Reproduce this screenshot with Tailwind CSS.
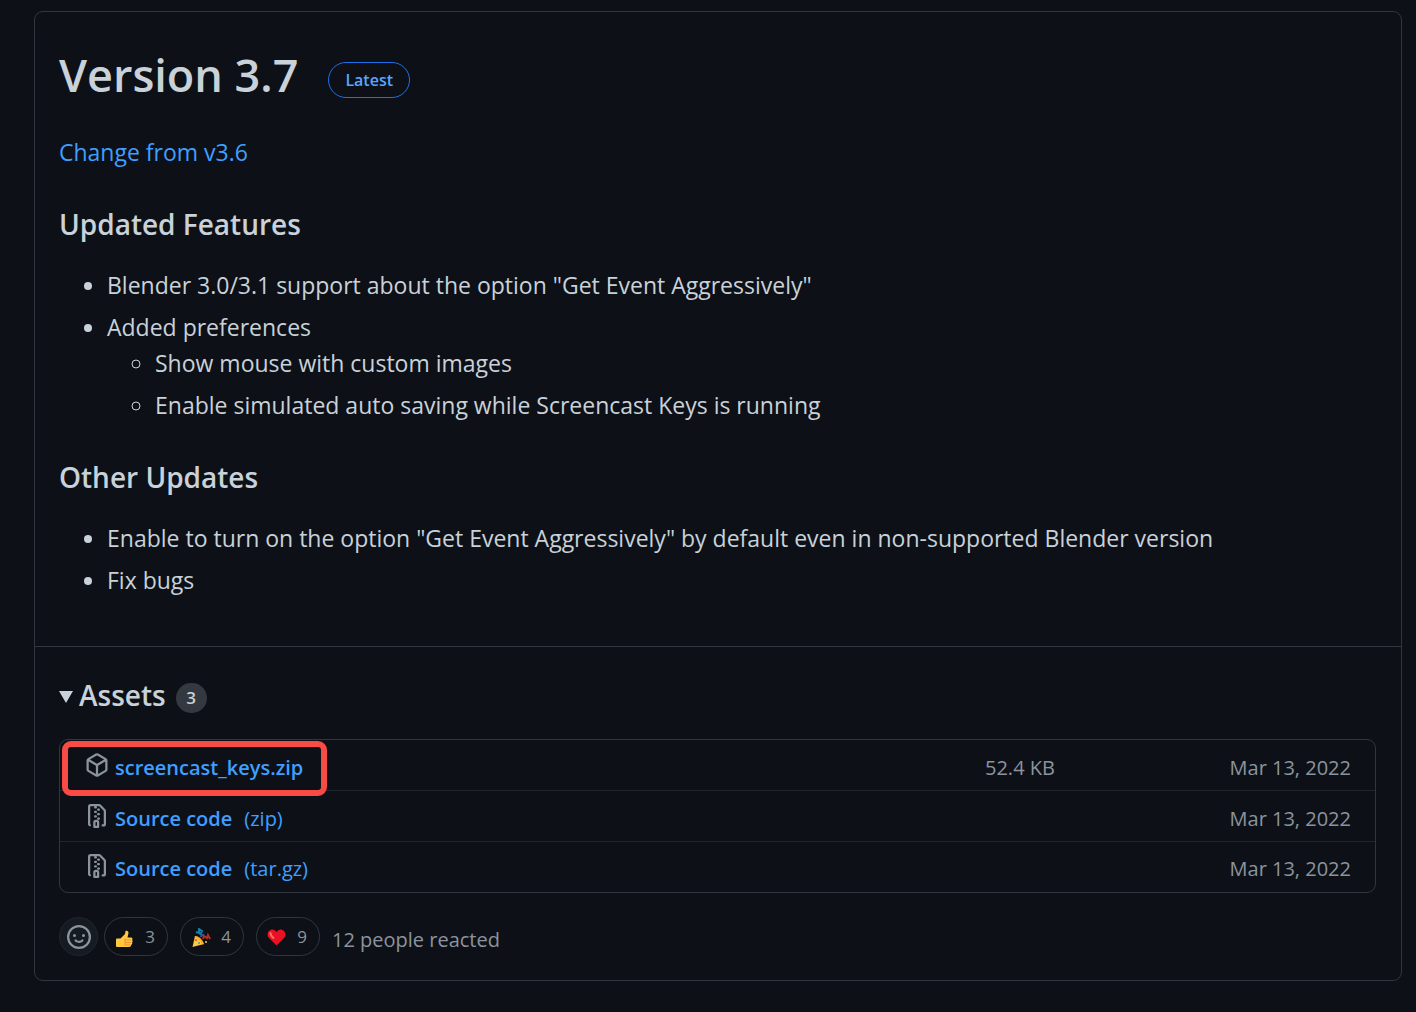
<!DOCTYPE html>
<html lang="en">
<head>
<meta charset="utf-8">
<meta name="viewport" content="width=device-width, initial-scale=1">
<title>Version 3.7</title>
<script src="https://cdn.jsdelivr.net/npm/@tailwindcss/browser@4"></script>
</head>
<body class="min-h-screen bg-[#0d1117] pt-[11px] pr-[14px] pb-[26px] pl-[34px] font-['Open_Sans','Noto_Sans',sans-serif] text-[23px] leading-[36px] text-[#c9d1d9]">
<main class="rounded-[9px] border border-[#30363d]">
  <section class="px-6 pt-[27px] pb-12">
    <header class="flex items-center gap-[30px]">
      <h1 class="text-[45px] leading-[72px] font-semibold">Version 3.7</h1>
      <span class="mt-[10px] rounded-full border border-[#1f6feb] px-4 text-[16px] leading-[34px] font-semibold text-[#58a6ff]">Latest</span>
    </header>
    <p class="mt-[23px]"><a href="#" class="text-[#409eff]">Change from v3.6</a></p>
    <h2 class="mt-9 text-[28px] font-semibold">Updated Features</h2>
    <ul class="mt-[25px] list-disc pl-12">
      <li>Blender 3.0/3.1 support about the option "Get Event Aggressively"</li>
      <li class="mt-[6px]">Added preferences
        <ul class="list-[circle] pl-12">
          <li>Show mouse with custom images</li>
          <li class="mt-[6px]">Enable simulated auto saving while Screencast Keys is running</li>
        </ul>
      </li>
    </ul>
    <h2 class="mt-9 text-[28px] font-semibold">Other Updates</h2>
    <ul class="mt-[25px] list-disc pl-12">
      <li>Enable to turn on the option "Get Event Aggressively" by default even in non-supported Blender version</li>
      <li class="mt-[6px]">Fix bugs</li>
    </ul>
  </section>
  <section class="border-t border-[#30363d] pt-[30px] pr-[25px] pb-6 pl-6">
    <details open>
      <summary class="flex list-none items-center">
        <svg class="mt-1 mr-[6px] h-[12px] w-[14px]" viewBox="0 0 14 12" fill="#c9d1d9"><path d="M0 0h14L7 12z"/></svg>
        <span class="text-[28px] leading-[36px] font-semibold">Assets</span>
        <span class="mt-[6px] ml-[10px] h-[30px] min-w-[31px] rounded-full bg-[#343941] px-2 text-center text-[17px] leading-[30px] font-semibold">3</span>
      </summary>
      <div class="relative mt-[26px] rounded-[9px] border border-[#30363d]">
        <table class="w-full text-[20px] leading-[30px]">
          <tbody>
            <tr class="h-[50px] border-b border-[#21262d]">
              <td class="pt-[6px] pl-[25px]"><div class="flex items-center">
                <svg class="mr-[6px] mb-[6px] h-6 w-6" viewBox="0 0 16 16" fill="#8b949e"><path fill-rule="evenodd" d="M8.878.392a1.75 1.75 0 00-1.756 0l-5.25 3.045A1.75 1.75 0 001 4.951v6.098c0 .624.332 1.2.872 1.514l5.25 3.045a1.75 1.75 0 001.756 0l5.25-3.045c.54-.313.872-.89.872-1.514V4.951c0-.624-.332-1.2-.872-1.514L8.878.392zM7.875 1.69a.25.25 0 01.25 0l4.63 2.685L8 7.133 3.245 4.375l4.63-2.685zM2.5 5.677v5.372c0 .09.047.171.125.216l4.625 2.683V8.432L2.5 5.677zm6.25 8.271l4.625-2.683a.25.25 0 00.125-.216V5.677L8.75 8.432v5.516z"/></svg>
                <a href="#" class="font-semibold text-[#409eff]">screencast_keys.zip</a></div></td>
              <td class="w-[120px] pt-[6px] text-left text-[#8b949e]">52.4 KB</td>
              <td class="w-[270px] pt-[6px] pr-6 text-right text-[#8b949e]">Mar 13, 2022</td>
            </tr>
            <tr class="h-[51px] border-b border-[#21262d]">
              <td class="pt-[6px] pl-[25px]"><div class="flex items-center">
                <svg class="mr-[6px] mb-[6px] h-6 w-6" viewBox="0 0 16 16" fill="#8b949e"><path fill-rule="evenodd" d="M3.5 1.75a.25.25 0 01.25-.25h3a.75.75 0 000 1.5h.5a.75.75 0 000-1.5h2.086a.25.25 0 01.177.073l2.914 2.914a.25.25 0 01.073.177v8.586a.25.25 0 01-.25.25h-.5a.75.75 0 000 1.5h.5A1.75 1.75 0 0014 13.25V4.664c0-.464-.184-.909-.513-1.237L10.573.513A1.75 1.75 0 009.336 0H3.75A1.75 1.75 0 002 1.75v11.5c0 .649.353 1.214.874 1.515a.75.75 0 10.752-1.298.25.25 0 01-.126-.217V1.75zM8.75 3a.75.75 0 000 1.5h.5a.75.75 0 000-1.5h-.5zM6 5.25a.75.75 0 01.75-.75h.5a.75.75 0 010 1.5h-.5A.75.75 0 016 5.25zm2 1.5A.75.75 0 018.75 6h.5a.75.75 0 010 1.5h-.5A.75.75 0 018 6.75zm-1.25.75a.75.75 0 000 1.5h.5a.75.75 0 000-1.5h-.5zM8 9.75A.75.75 0 018.75 9h.5a.75.75 0 010 1.5h-.5A.75.75 0 018 9.75zm-.75.75a1.75 1.75 0 00-1.75 1.75v3c0 .414.336.75.75.75h2.5a.75.75 0 00.75-.75v-3a1.75 1.75 0 00-1.75-1.75h-.5zM7 12.25a.25.25 0 01.25-.25h.5a.25.25 0 01.25.25v2.25H7v-2.25z"/></svg>
                <a href="#" class="text-[#409eff]"><span class="mr-3 font-semibold">Source code</span>(zip)</a></div></td>
              <td></td>
              <td class="pt-[6px] pr-6 text-right text-[#8b949e]">Mar 13, 2022</td>
            </tr>
            <tr class="h-[51px]">
              <td class="pt-1 pl-[25px]"><div class="flex items-center">
                <svg class="mr-[6px] mb-[6px] h-6 w-6" viewBox="0 0 16 16" fill="#8b949e"><path fill-rule="evenodd" d="M3.5 1.75a.25.25 0 01.25-.25h3a.75.75 0 000 1.5h.5a.75.75 0 000-1.5h2.086a.25.25 0 01.177.073l2.914 2.914a.25.25 0 01.073.177v8.586a.25.25 0 01-.25.25h-.5a.75.75 0 000 1.5h.5A1.75 1.75 0 0014 13.25V4.664c0-.464-.184-.909-.513-1.237L10.573.513A1.75 1.75 0 009.336 0H3.75A1.75 1.75 0 002 1.75v11.5c0 .649.353 1.214.874 1.515a.75.75 0 10.752-1.298.25.25 0 01-.126-.217V1.75zM8.75 3a.75.75 0 000 1.5h.5a.75.75 0 000-1.5h-.5zM6 5.25a.75.75 0 01.75-.75h.5a.75.75 0 010 1.5h-.5A.75.75 0 016 5.25zm2 1.5A.75.75 0 018.75 6h.5a.75.75 0 010 1.5h-.5A.75.75 0 018 6.75zm-1.25.75a.75.75 0 000 1.5h.5a.75.75 0 000-1.5h-.5zM8 9.75A.75.75 0 018.75 9h.5a.75.75 0 010 1.5h-.5A.75.75 0 018 9.75zm-.75.75a1.75 1.75 0 00-1.75 1.75v3c0 .414.336.75.75.75h2.5a.75.75 0 00.75-.75v-3a1.75 1.75 0 00-1.75-1.75h-.5zM7 12.25a.25.25 0 01.25-.25h.5a.25.25 0 01.25.25v2.25H7v-2.25z"/></svg>
                <a href="#" class="text-[#409eff]"><span class="mr-3 font-semibold">Source code</span>(tar.gz)</a></div></td>
              <td></td>
              <td class="pt-1 pr-6 text-right text-[#8b949e]">Mar 13, 2022</td>
            </tr>
          </tbody>
        </table>
        <div class="pointer-events-none absolute top-[1px] left-[2px] h-[55px] w-[265px] rounded-[9px] border-[6px] border-[#f94b46]"></div>
      </div>
    </details>
    <div class="mt-6 flex items-center text-[#8b949e]">
      <button aria-label="Add reaction" class="mr-[6px] flex size-[39px] items-center justify-center rounded-full border border-[#21262d] bg-[#161b22]">
        <svg class="size-6" viewBox="0 0 16 16" fill="#8b949e"><path fill-rule="evenodd" d="M1.5 8a6.5 6.5 0 1113 0 6.5 6.5 0 01-13 0zM8 0a8 8 0 100 16A8 8 0 008 0zM5 8a1 1 0 100-2 1 1 0 000 2zm7-1a1 1 0 11-2 0 1 1 0 012 0zM5.32 9.636a.75.75 0 011.038.175l.007.009c.103.118.22.222.35.31.264.178.683.37 1.285.37.602 0 1.02-.192 1.285-.371.13-.088.247-.192.35-.31l.007-.008a.75.75 0 111.222.87l-.614-.431c.614.43.614.431.613.431v.001l-.001.002-.002.003-.005.007-.014.019a1.984 1.984 0 01-.184.213c-.16.166-.338.316-.53.445-.63.418-1.37.638-2.127.629-.946 0-1.652-.308-2.126-.63a3.331 3.331 0 01-.715-.657l-.014-.02-.005-.006-.002-.003v-.002h-.001l.613-.432-.614.43a.75.75 0 01.183-1.044h.001z"/></svg>
      </button>
      <button class="mr-3 flex h-[39px] w-16 items-center justify-between rounded-full border border-[#30363d] pr-3 pl-[10px] text-[17px]">
        <svg class="mt-[4px] size-[18px]" viewBox="0 0 18 18"><path fill="#ffc83d" d="M1 9.500q0-1 1-1h3.500L10 4l.5-3c2-1 3 .5 3 2L12.500 7.500H16c1.500 0 2 1.500 1 2.500 1 1 .8 2 0 2.500.6 1 0 2-.8 2.300 0 1.700-.8 2.200-2.200 2.200H2q-1 0-1-1z"/><path fill="none" stroke="#e8912d" d="M10 10h6M10.500 12.500h5.500M10.500 15h5M10 8.500v7"/></svg>3</button>
      <button class="mr-3 flex h-[39px] w-16 items-center justify-between rounded-full border border-[#30363d] pr-3 pl-[10px] text-[17px]">
        <svg class="mt-[2px] size-[20px]" viewBox="0 0 20 20"><path fill="#ffc83d" d="M4 8q5 1 9 8L1.500 19z"/><path fill="#ffa62b" d="M4 8q6 0 9 8l-2 .5Q9 11 3.700 9z"/><path fill="none" stroke="#127fa5" stroke-width="2" d="M5 4l3 1V1l3 2-2 4"/><path fill="none" stroke="#5a4a9c" stroke-width="2" d="M10 9q1-3 3-2"/><path fill="none" stroke="#b5301c" stroke-width="2" d="M12 11l1-3 3 2 1-3 2 4"/><circle cx="15" cy="14" r="1" fill="#ffc83d"/><circle cx="5" cy="12" r="1" fill="#e8452c"/><circle cx="8" cy="15" r="1" fill="#3aa6a0"/></svg>4</button>
      <button class="mr-3 flex h-[39px] w-16 items-center justify-between rounded-full border border-[#30363d] pr-3 pl-[10px] text-[17px]">
        <svg class="mt-[2px] size-[19px]" viewBox="0 0 19 19"><path fill="#e81224" d="M9.500 17.500L1.500 9.500C-1 6 2 1.500 5.500 1.500q2.500 0 4 2.500 1.500-2.500 4-2.500C17 1.500 20 6 17.500 9.500z"/><path fill="none" stroke="#f8705c" stroke-width="2" stroke-linecap="round" d="M3.500 5q0 3 3 5"/></svg>9</button>
      <span class="mt-[6px] text-[20px] leading-[30px]">12 people reacted</span>
    </div>
  </section>
</main>
</body>
</html>
